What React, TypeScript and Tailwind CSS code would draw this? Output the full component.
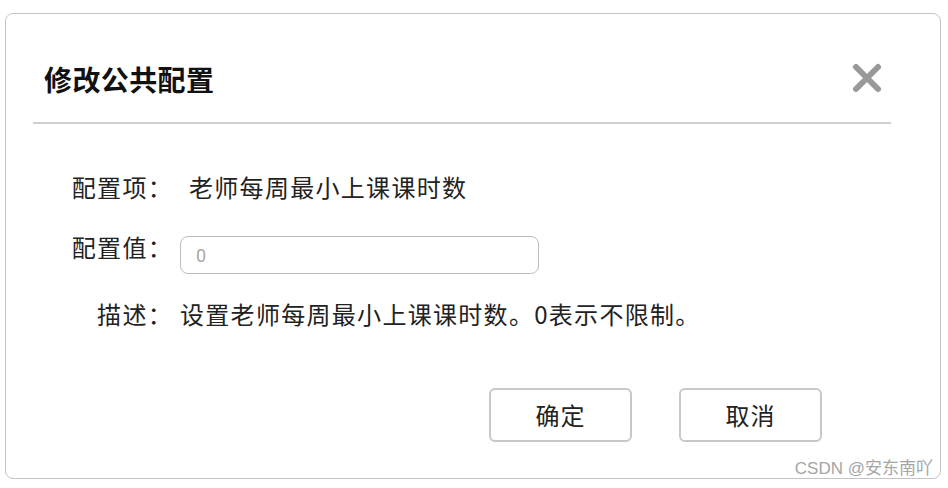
export default function App() {
  return (
    <div
      className="relative w-[948px] h-[488px] bg-white pt-[13px] pl-[5px]"
      style={{ fontFamily: '"Noto Sans CJK SC", "Noto Sans", sans-serif' }}
    >
      {/* DIALOG */}
      <div className="w-[936px] h-[466px] border border-[#c4c4c4] rounded-[8px] bg-white">

        {/* HEADER */}
        <div className="ml-[27px] mr-[49px] h-[110px] border-b-2 border-[#cfcfcf] flex items-center justify-between pt-[22px] pl-[11px] pr-[8px]">
          <h2 className="text-[28px] leading-[30px] font-bold text-[#111] tracking-[0.4px]">
            修改公共配置
          </h2>
          <svg width="32" height="32" viewBox="0 0 32 32" className="mt-[-2px]">
            <path
              d="M5 5 L27 27 M27 5 L5 27"
              stroke="#999"
              strokeWidth="6"
              strokeLinecap="round"
            />
          </svg>
        </div>

        {/* FORM */}
        <div className="pl-[58px] text-[24px] text-[#222] tracking-[1.3px] whitespace-nowrap">

          <div className="mt-[43px] h-[40px] flex items-center">
            <div className="w-[109px] shrink-0 text-right leading-[26px]">配置项：</div>
            <div className="pl-[16px] leading-[26px]">老师每周最小上课课时数</div>
          </div>

          <div className="mt-[27px] flex items-start">
            <div className="w-[109px] shrink-0 text-right leading-[26px]">配置值：</div>
            <input
              className="ml-[7px] mt-[2px] w-[359px] h-[38px] border border-[#bdbdbd] rounded-[8px] pl-[15px] text-[18px] tracking-normal placeholder:text-[#a8a8a8] outline-none"
              style={{ fontFamily: 'Roboto, "Noto Sans", sans-serif' }}
              placeholder="0"
            />
          </div>

          <div className="mt-[20px] h-[40px] flex items-center">
            <div className="w-[109px] shrink-0 text-right leading-[26px]">描述：</div>
            <div className="pl-[7px] leading-[26px]">设置老师每周最小上课课时数。0表示不限制。</div>
          </div>
        </div>

        {/* BUTTONS */}
        <div className="mt-[54px] flex justify-end gap-[47px] pr-[118px]">
          <button className="w-[143px] h-[54px] border-2 border-[#c8c8c8] rounded-[6px] text-[24px] tracking-[1px] text-[#222] bg-white">
            确定
          </button>
          <button className="w-[143px] h-[54px] border-2 border-[#c8c8c8] rounded-[6px] text-[24px] tracking-[1px] text-[#222] bg-white">
            取消
          </button>
        </div>
      </div>

      {/* WATERMARK */}
      <div
        className="absolute right-[15px] bottom-[9px] text-[17px] leading-[20px] text-[#a5a5a5]"
        style={{ fontFamily: '"Liberation Sans", "Noto Sans CJK SC", sans-serif' }}
      >
        CSDN @安东南吖
      </div>
    </div>
  );
}
